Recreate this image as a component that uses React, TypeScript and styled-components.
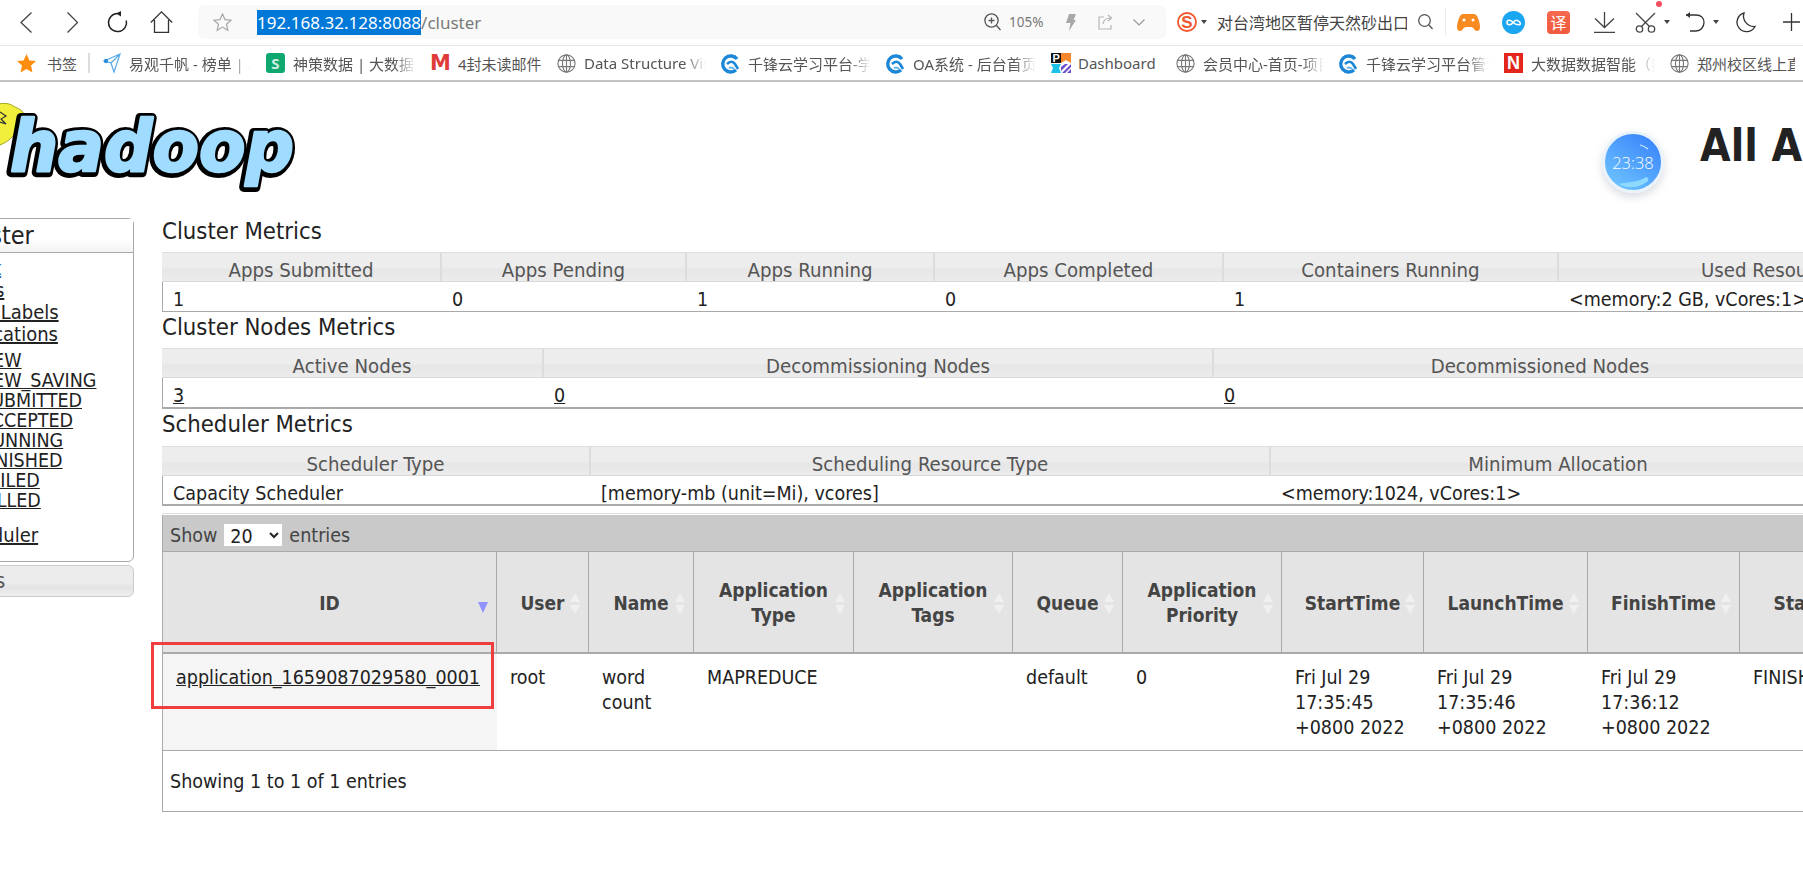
import React from 'react';
import styled, { createGlobalStyle } from 'styled-components';

const UI_FONT = `"Noto Sans", "Noto Sans CJK SC", sans-serif`;
const PAGE_FONT = `"DejaVu Sans Condensed", "DejaVu Sans", sans-serif`;

const GlobalStyle = createGlobalStyle`
  html, body {
    margin: 0;
    padding: 0;
    background: #fff;
    overflow: hidden;
  }
  * { box-sizing: border-box; }
`;

const Screen = styled.div`
  position: relative;
  width: 1803px;
  height: 890px;
  overflow: hidden;
  background: #fff;
`;

/* ---------- browser chrome ---------- */

const Toolbar = styled.div`
  display: flex;
  align-items: center;
  height: 46px;
  padding: 0 0 1px 20px;
  border-bottom: 1px solid #e6e6e6;
  font-family: ${UI_FONT};
`;

const Slot = styled.span<{ $w: number; $ml?: number }>`
  position: relative;
  display: flex;
  align-items: center;
  justify-content: center;
  flex: none;
  width: ${(p) => p.$w}px;
  margin-left: ${(p) => p.$ml ?? 0}px;
`;

const AddressBar = styled.div`
  display: flex;
  align-items: center;
  flex: none;
  width: 968px;
  height: 34px;
  margin-left: 25px;
  padding: 0 21px 0 15px;
  background: #f9f9f9;
  border-radius: 7px;
`;

const Url = styled.span`
  margin-left: 25px;
  font-size: 17px;
  line-height: 25px;
  color: #7a7a7a;
`;

const UrlSelected = styled.span`
  display: inline-block;
  background: #0078d7;
  color: #fff;
`;

const Spacer = styled.span`
  flex: 1;
`;

const ZoomLevel = styled.span`
  margin-left: 8px;
  width: 36px;
  font-size: 13.5px;
  color: #777;
`;

const SearchText = styled.span`
  flex: none;
  width: 190px;
  margin-left: 10px;
  overflow: hidden;
  white-space: nowrap;
  font-size: 16px;
  color: #444;
`;

const Divider = styled.span`
  flex: none;
  width: 1px;
  height: 28px;
  margin-left: 13px;
  background: #ececec;
`;

const TranslateBadge = styled.span`
  display: flex;
  align-items: center;
  justify-content: center;
  width: 23px;
  height: 23px;
  border-radius: 4px;
  background: linear-gradient(#f5694f, #ef5a3e);
  color: #fff;
  font-size: 16px;
`;

const RedDot = styled.span`
  position: absolute;
  top: -11px;
  right: -6px;
  width: 6px;
  height: 6px;
  border-radius: 50%;
  background: #f2505e;
`;

const BookmarkBar = styled.div`
  display: flex;
  align-items: center;
  height: 36px;
  padding: 0 0 0 17px;
  border-bottom: 2px solid #c4c4c4;
  font-family: ${UI_FONT};
  font-size: 15px;
  color: #555;
  white-space: nowrap;
  overflow: hidden;
`;

const BookmarkRoot = styled.span`
  flex: none;
  width: 30px;
  margin-left: 11px;
`;

const BookmarkSeparator = styled.span`
  flex: none;
  width: 2px;
  height: 20px;
  margin: 0 12px 0 11px;
  background: #dcdcdc;
`;

const Bookmark = styled.span<{ $w: number }>`
  display: flex;
  align-items: center;
  flex: none;
  gap: 8px;
  width: ${(p) => p.$w}px;
  padding-right: 15px;
`;

const BookmarkIcon = styled.span`
  display: flex;
  align-items: center;
  justify-content: center;
  flex: none;
  width: 19px;
  height: 20px;
`;

const BookmarkText = styled.span<{ $fade?: boolean }>`
  flex: 1;
  min-width: 0;
  overflow: hidden;
  ${(p) =>
    p.$fade
      ? `-webkit-mask-image: linear-gradient(90deg, #000 82%, transparent 100%);
         mask-image: linear-gradient(90deg, #000 82%, transparent 100%);`
      : ''}
`;

const GreenMark = styled.span`
  display: flex;
  align-items: center;
  justify-content: center;
  width: 20px;
  height: 20px;
  border-radius: 3px;
  background: #0fa871;
  color: #cdeee0;
  font-size: 15px;
  font-weight: 700;
`;

const GmailMark = styled.span`
  color: #e03b3b;
  font-family: "DejaVu Sans", sans-serif;
  font-size: 21px;
  font-weight: 700;
  line-height: 20px;
`;

const RedMark = styled.span`
  display: flex;
  align-items: center;
  justify-content: center;
  width: 20px;
  height: 20px;
  background: #e3261b;
  color: #fff;
  font-family: "Liberation Sans", sans-serif;
  font-size: 18px;
  font-weight: 700;
`;

/* ---------- the web page ---------- */

const PageHeader = styled.header`
  display: flex;
  height: 136px;
  font-family: ${PAGE_FONT};
`;

const Logo = styled.svg`
  flex: none;
  width: 304px;
  height: 136px;
`;

const Title = styled.h1`
  flex: none;
  margin: 34px 0 0 1396px;
  font-size: 44px;
  line-height: 60px;
  font-weight: 700;
  color: #222;
  white-space: nowrap;
`;

const ClockBall = styled.div`
  position: absolute;
  left: 1602px;
  top: 131px;
  display: flex;
  align-items: center;
  justify-content: center;
  width: 62px;
  height: 62px;
  border: 3px solid #eaf2fb;
  border-radius: 50%;
  background: linear-gradient(215deg, #3a85fb 10%, #6cc3ff 90%);
  box-shadow: 0 4px 8px rgba(120, 130, 150, 0.28);
  color: #fff;
  font-family: "Open Sans", ${UI_FONT};
  font-size: 16.5px;
  font-weight: 300;
`;

const ClockShine = styled.svg`
  position: absolute;
  inset: 0;
  width: 56px;
  height: 56px;
`;

const Columns = styled.div`
  display: flex;
  align-items: flex-start;
  width: 2100px;
  margin-left: -66px;
  font-family: ${PAGE_FONT};
  color: #222;
`;

const Sidebar = styled.aside`
  flex: none;
  width: 200px;
`;

const NavPanel = styled.div`
  height: 344px;
  border: 1px solid #aaa;
  border-radius: 6px;
`;

const NavHeading = styled.div`
  height: 34px;
  padding-left: 19px;
  border-bottom: 1px solid #aaa;
  background: linear-gradient(#fff 60%, #f3f3f3);
  font-size: 25px;
  line-height: 34px;
`;

const NavList = styled.ul`
  margin: 0;
  padding: 4px 0 0 13px;
  list-style: none;
`;

const NavLink = styled.a<{ $blue?: boolean }>`
  display: block;
  height: 22px;
  color: ${(p) => (p.$blue ? '#1e73d8' : '#222')};
  font-size: 20px;
  line-height: 22px;
  text-decoration: underline;
`;

const SubList = styled.ul`
  margin: 6px 0 0;
  padding: 0 0 0 32px;
  list-style: none;
`;

const SubLink = styled.a`
  display: block;
  height: 20px;
  color: #222;
  font-size: 19.5px;
  line-height: 20px;
  text-decoration: underline;
`;

const SchedulerLink = styled(NavLink)`
  margin-top: 13px;
`;

const ClosedPanel = styled.div`
  height: 32px;
  margin-top: 3px;
  padding-left: 22px;
  border: 1px solid #ccc;
  border-radius: 6px;
  background: linear-gradient(#ececec 55%, #e3e3e3 70%, #efefef);
  color: #555;
  font-size: 22px;
  line-height: 30px;
`;

const Content = styled.main`
  flex: none;
  width: 1860px;
  margin: -2px 0 0 28px;
`;

const Heading = styled.h3<{ $h?: number }>`
  height: ${(p) => p.$h ?? 36}px;
  margin: 0;
  font-size: 23.7px;
  font-weight: 400;
  line-height: 30px;
  white-space: nowrap;
`;

const MetricsTable = styled.table<{ $width: number }>`
  width: ${(p) => p.$width}px;
  table-layout: fixed;
  border-collapse: separate;
  border-spacing: 0;
`;

const Col = styled.col<{ $w: number }>`
  width: ${(p) => p.$w}px;
`;

const MetricsHead = styled.th`
  height: 30px;
  padding: 5px 0 0;
  border-top: 1px solid #ddd;
  border-right: 2px solid #dcdcdc;
  border-bottom: 1px solid #d8d8d8;
  background: linear-gradient(#ededed 50%, #e6e6e6 60%, #ececec);
  color: #555;
  font-size: 20.2px;
  font-weight: 400;
  line-height: 20px;
`;

const MetricsCell = styled.td<{ $tall?: boolean; $heavy?: boolean }>`
  height: ${(p) => (p.$tall ? 31 : 30)}px;
  padding: 7px 0 0 10px;
  border-bottom: ${(p) => (p.$heavy ? 2 : 1)}px solid #aaa;
  font-size: 19.5px;
  line-height: 20px;
  white-space: nowrap;
  overflow: hidden;

  &:first-child {
    border-left: 1px solid #aaa;
  }
`;

const CellLink = styled.a`
  color: #222;
  text-decoration: underline;
`;

const AppsWrapper = styled.div`
  position: relative;
  width: 1697px;
  margin-top: 7px;
  border-top: 1px solid #ddd;
`;

const AppsToolbar = styled.div`
  display: flex;
  align-items: center;
  height: 36px;
  margin-top: 1px;
  padding: 4px 0 0 7px;
  border-left: 1px solid #aaa;
  background: #c9c9c9;
  color: #444;
  font-size: 19.5px;
`;

const PageSize = styled.select`
  width: 58px;
  height: 22px;
  margin: 0 7px 0 7px;
  padding: 0 0 0 2px;
  border: none;
  outline: none;
  background: #fff;
  color: #222;
  font-family: ${PAGE_FONT};
  font-size: 19.5px;
`;

const AppsTable = styled(MetricsTable)`
  border-left: 1px solid #aaa;
`;

const AppsHead = styled.th`
  position: relative;
  height: 103px;
  padding: 2px 0 0;
  border-top: 1px solid #aaa;
  border-right: 1px solid #aaa;
  border-bottom: 2px solid #aaa;
  background: #e4e4e4;
  color: #444;
  font-size: 19px;
  font-weight: 700;
  line-height: 25px;
  text-align: center;
`;

const SortMark = styled.svg`
  position: absolute;
  right: 7px;
  top: 40px;
  width: 12px;
  height: 23px;
`;

const AppsCell = styled.td<{ $sorted?: boolean }>`
  height: 97px;
  padding: 11px 10px 0 13px;
  border-bottom: 1px solid #aaa;
  background: ${(p) => (p.$sorted ? '#f5f5f5' : '#fff')};
  font-size: 19.5px;
  line-height: 25px;
  vertical-align: top;
  overflow: hidden;
`;

const AppsFooter = styled.div`
  height: 61px;
  padding-left: 7px;
  border-left: 1px solid #aaa;
  border-bottom: 1px solid #aaa;
  font-size: 19.5px;
  line-height: 62px;
`;

const Highlight = styled.div`
  position: absolute;
  left: -11px;
  top: 128px;
  width: 343px;
  height: 67px;
  border: 3px solid #f13d3d;
`;

/* ---------- drawings ---------- */

const Line = styled.svg`
  display: block;
  overflow: visible;
`;

const Caret = () => (
  <Line width="6" height="4" viewBox="0 0 6 4">
    <path d="M0 0h6L3 4z" fill="#444" />
  </Line>
);

const QianfengIcon = () => (
  <Line width="19" height="20" viewBox="0 0 19 20">
    <path d="M15 17A8 8 0 1 1 16 6" fill="none" stroke="#1b87d6" strokeWidth="3.4" />
    <path d="M6 11c3-3 6-3 8 0l3 5" fill="none" stroke="#1b87d6" strokeWidth="2.6" />
    <path d="M8 15c2-1 3-1 5 1" fill="none" stroke="#63b6ea" strokeWidth="2" />
  </Line>
);

const GlobeIcon = () => (
  <Line width="19" height="19" viewBox="0 0 19 19" fill="none" stroke="#777" strokeWidth="1.1">
    <circle cx="9.5" cy="9.5" r="8.6" />
    <ellipse cx="9.5" cy="9.5" rx="4" ry="8.6" />
    <path d="M9.5 1v17M1.6 6.4h15.8M1.6 12.6h15.8" />
  </Line>
);

const YiguanIcon = () => (
  <Line width="18" height="20" viewBox="0 0 18 20" fill="none" stroke="#56a9e6" strokeWidth="1.2">
    <path d="M1 8 17 1 11 19 8 10ZM8 10 17 1M1 8l7 2" />
    <circle cx="3" cy="8" r="2.2" fill="#2c8fdc" stroke="none" />
  </Line>
);

const PmIcon = () => (
  <Line width="20" height="20" viewBox="0 0 20 20">
    <rect x="0" y="0" width="10" height="10" fill="#111" />
    <text x="1.6" y="9" fontSize="11" fontWeight="700" fill="#fff" fontFamily="Liberation Sans">P</text>
    <path d="M10 0h10v10l-5-3-5 3z" fill="#f6882b" />
    <path d="M0 11h10L8 15l2 5H0l2-5z" fill="#1cc3e6" />
    <path d="M11 20 20 11v3l-6 6zM16 20l4-4v4z" fill="#6b4fc8" />
    <path d="M10 14l4-3h3l-7 7z" fill="#6b4fc8" />
  </Line>
);

const SORT_CHEVRON = '#f0f0f0';

const SortArrows = () => (
  <SortMark viewBox="0 0 12 23">
    <path d="M6 1 11 10H1z" fill={SORT_CHEVRON} />
    <path d="M6 22 11 13H1z" fill={SORT_CHEVRON} />
  </SortMark>
);

const SortedDown = () => (
  <SortMark viewBox="0 0 12 23">
    <path d="M1 10h10l-5 11z" fill="#8f92ff" />
  </SortMark>
);

const StarFilled = () => (
  <Line width="19" height="19" viewBox="0 0 19 19">
    <path d="M9.5 0l2.9 6.4 6.6.7-5 4.5 1.5 6.9-6-3.5-6 3.5 1.5-6.9-5-4.5 6.6-.7z" fill="#ff8c0a" />
  </Line>
);

type Mark = 'yiguan' | 'green' | 'gmail' | 'globe' | 'qf' | 'pm' | 'red';

const markFor = (mark: Mark) => {
  switch (mark) {
    case 'yiguan':
      return <YiguanIcon />;
    case 'green':
      return <GreenMark>S</GreenMark>;
    case 'gmail':
      return <GmailMark>M</GmailMark>;
    case 'globe':
      return <GlobeIcon />;
    case 'qf':
      return <QianfengIcon />;
    case 'pm':
      return <PmIcon />;
    default:
      return <RedMark>N</RedMark>;
  }
};

const bookmarks: { mark: Mark; text: string; w: number; fade?: boolean }[] = [
  { mark: 'yiguan', text: '易观千帆 - 榜单 | 易观方舟', w: 164, fade: true },
  { mark: 'green', text: '神策数据 | 大数据分析平台', w: 165, fade: true },
  { mark: 'gmail', text: '4封未读邮件', w: 126 },
  { mark: 'globe', text: 'Data Structure Visualization', w: 164, fade: true },
  { mark: 'qf', text: '千锋云学习平台-学员中心', w: 165, fade: true },
  { mark: 'qf', text: 'OA系统 - 后台首页面', w: 165, fade: true },
  { mark: 'pm', text: 'Dashboard', w: 125 },
  { mark: 'globe', text: '会员中心-首页-项目管理', w: 163, fade: true },
  { mark: 'qf', text: '千锋云学习平台管理后台', w: 165, fade: true },
  { mark: 'red', text: '大数据数据智能（数据', w: 166, fade: true },
  { mark: 'globe', text: '郑州校区线上直播', w: 140 },
];

const clusterHeads = ['Apps Submitted', 'Apps Pending', 'Apps Running', 'Apps Completed', 'Containers Running', 'Used Resources'];
const clusterCells = ['1', '0', '1', '0', '1', '<memory:2 GB, vCores:1>'];
const clusterCols = [280, 245, 248, 289, 335, 430];

const nodeHeads = ['Active Nodes', 'Decommissioning Nodes', 'Decommissioned Nodes'];
const nodeCols = [382, 670, 654];

const schedulerHeads = ['Scheduler Type', 'Scheduling Resource Type', 'Minimum Allocation'];
const schedulerCells = ['Capacity Scheduler', '[memory-mb (unit=Mi), vcores]', '<memory:1024, vCores:1>'];
const schedulerCols = [429, 680, 576];

const appCols = [334, 92, 105, 160, 159, 110, 159, 142, 164, 152, 120];
const appHeads: React.ReactNode[] = [
  'ID',
  'User',
  'Name',
  <>Application<br />Type</>,
  <>Application<br />Tags</>,
  'Queue',
  <>Application<br />Priority</>,
  'StartTime',
  'LaunchTime',
  'FinishTime',
  'State',
];
const appCells: React.ReactNode[] = [
  'root',
  'word count',
  'MAPREDUCE',
  '',
  'default',
  '0',
  <>Fri Jul 29 17:35:45 +0800 2022</>,
  <>Fri Jul 29 17:35:46 +0800 2022</>,
  <>Fri Jul 29 17:36:12 +0800 2022</>,
  'FINISHED',
];

const App: React.FC = () => {
  return (
    <Screen>
      <GlobalStyle />

      <Toolbar>
        <Slot $w={12}>
          <Line width="12" height="21" viewBox="0 0 12 21" fill="none" stroke="#444" strokeWidth="1.3">
            <path d="M11.5 .5 1 10.5l10.5 10" />
          </Line>
        </Slot>
        <Slot $w={11} $ml={35}>
          <Line width="11" height="21" viewBox="0 0 11 21" fill="none" stroke="#444" strokeWidth="1.3">
            <path d="M.5 .5 10.5 10.5.5 20.5" />
          </Line>
        </Slot>
        <Slot $w={20} $ml={29}>
          <Line width="20" height="22" viewBox="0 0 20 22" fill="none" stroke="#222" strokeWidth="1.5">
            <path d="M10.5 2.6A9 9 0 1 0 19.300 9.500" />
            <path d="M9 2.600 14 0v5.400z" fill="#222" stroke="none" />
          </Line>
        </Slot>
        <Slot $w={23} $ml={23}>
          <Line width="23" height="22" viewBox="0 0 23 22" fill="none" stroke="#333" strokeWidth="1.3">
            <path d="M.8 11.5 11.5.8l10.7 10.7M4.5 9v12.3h14V9" />
          </Line>
        </Slot>

        <AddressBar>
          <Slot $w={19}>
            <Line width="19" height="18" viewBox="0 0 19 18" fill="none" stroke="#a5a5a5" strokeWidth="1.2">
              <path d="M9.5 1l2.5 5.6 6 .6-4.5 4 1.3 6-5.3-3.1-5.3 3.1 1.3-6-4.5-4 6-.6z" />
            </Line>
          </Slot>
          <Url>
            <UrlSelected>192.168.32.128:8088</UrlSelected>/cluster
          </Url>
          <Spacer />
          <Slot $w={17}>
            <Line width="17" height="18" viewBox="0 0 17 18" fill="none" stroke="#555" strokeWidth="1.3">
              <circle cx="7.5" cy="7.5" r="6.6" />
              <path d="M12.3 12.3 16.5 17M7.5 4.5v6M4.5 7.5h6" />
            </Line>
          </Slot>
          <ZoomLevel>105%</ZoomLevel>
          <Slot $w={10} $ml={21}>
            <Line width="10" height="17" viewBox="0 0 10 17">
              <path d="M3 0h7L7.5 6H10L3 17l1.5-8H0z" fill="#a8a8a8" />
            </Line>
          </Slot>
          <Slot $w={15} $ml={22}>
            <Line width="15" height="16" viewBox="0 0 15 16" fill="none" stroke="#b5b5b5" strokeWidth="1.2">
              <path d="M6 3H1v12h12v-4M5 10c.5-4 3-6 8-6M10 1l3.5 3L10 7" />
            </Line>
          </Slot>
          <Slot $w={12} $ml={20}>
            <Line width="12" height="7" viewBox="0 0 12 7" fill="none" stroke="#999" strokeWidth="1.2">
              <path d="M.5 .5 6 6l5.5-5.5" />
            </Line>
          </Slot>
        </AddressBar>

        <Slot $w={20} $ml={11}>
          <Line width="20" height="21" viewBox="0 0 20 21">
            <circle cx="10" cy="10" r="9" fill="none" stroke="#f0552b" strokeWidth="1.8" />
            <text x="10" y="16" textAnchor="middle" fontSize="17" fontWeight="700" fill="#f0552b" fontFamily="Liberation Sans">S</text>
          </Line>
        </Slot>
        <Slot $w={6} $ml={4}>
          <Caret />
        </Slot>
        <SearchText>对台湾地区暂停天然砂出口</SearchText>
        <Slot $w={14} $ml={11}>
          <Line width="15" height="16" viewBox="0 0 15 16" fill="none" stroke="#555" strokeWidth="1.3">
            <circle cx="6.5" cy="6.5" r="5.8" />
            <path d="M10.8 10.8 14.5 15" />
          </Line>
        </Slot>
        <Divider />
        <Slot $w={23} $ml={11}>
          <Line width="23" height="19" viewBox="0 0 23 19">
            <path d="M6 1h11c3 0 5 5 6 12 .3 3-1 5-3 5-3 0-3-4-6-4H9c-3 0-3 4-6 4-2 0-3.300-2-3-5C1 6 3 1 6 1z" fill="#f88a22" />
            <circle cx="7" cy="7" r="1.500" fill="#fff" />
            <circle cx="16" cy="7" r="1.500" fill="#fff" />
          </Line>
        </Slot>
        <Slot $w={23} $ml={22}>
          <Line width="23" height="23" viewBox="0 0 23 23">
            <circle cx="11.500" cy="11.500" r="11.500" fill="#1ba6f2" />
            <path d="M11 11.500c-2-3-6-3-6 0s4 3 6 0 5-3 7 0-4 3-7 0z" fill="none" stroke="#fff" strokeWidth="1.600" />
          </Line>
        </Slot>
        <Slot $w={23} $ml={22}>
          <TranslateBadge>译</TranslateBadge>
        </Slot>
        <Slot $w={21} $ml={24}>
          <Line width="21" height="21" viewBox="0 0 21 21" fill="none" stroke="#444" strokeWidth="1.300">
            <path d="M10.500 0v15M1 6.500l9.500 9 9.500-9M0 20.300h21" />
          </Line>
        </Slot>
        <Slot $w={21} $ml={20}>
          <Line width="21" height="21" viewBox="0 0 21 21" fill="none" stroke="#444" strokeWidth="1.300">
            <circle cx="4.500" cy="17" r="3.200" />
            <circle cx="16.500" cy="17" r="3.200" />
            <path d="M6.500 14.500 20 1M14.500 14.500 1 1" />
          </Line>
          <RedDot />
        </Slot>
        <Slot $w={6} $ml={8}>
          <Caret />
        </Slot>
        <Slot $w={19} $ml={15}>
          <Line width="20" height="20" viewBox="0 0 20 20" fill="none" stroke="#333" strokeWidth="1.300">
            <path d="M1 3h10c5 0 8 3 8 7.500S15.500 19 11 19H5" />
            <path d="M5 0 1 3l4 3z" fill="#333" stroke="none" />
          </Line>
        </Slot>
        <Slot $w={6} $ml={9}>
          <Caret />
        </Slot>
        <Slot $w={19} $ml={18}>
          <Line width="19" height="20" viewBox="0 0 19 20" fill="none" stroke="#333" strokeWidth="1.300">
            <path d="M7 1a9.500 9.500 0 1 0 11 13.500A10.500 10.500 0 0 1 7 1z" />
          </Line>
        </Slot>
        <Slot $w={17} $ml={27}>
          <Line width="17" height="18" viewBox="0 0 17 18" fill="none" stroke="#333" strokeWidth="1.300">
            <path d="M8.500 0v18M0 9h17" />
          </Line>
        </Slot>
      </Toolbar>

      <BookmarkBar>
        <StarFilled />
        <BookmarkRoot>书签</BookmarkRoot>
        <BookmarkSeparator />
        {bookmarks.map((b) => (
          <Bookmark key={b.text} $w={b.w}>
            <BookmarkIcon>{markFor(b.mark)}</BookmarkIcon>
            <BookmarkText $fade={b.fade}>{b.text}</BookmarkText>
          </Bookmark>
        ))}
      </BookmarkBar>

      <PageHeader>
        <Logo viewBox="0 0 304 136">
          <path d="M-6 24c6-4 16-3 19 0 6 3 10 4 11 9 0 7-5 14-9 19-6 7-14 12-21 12z" fill="#f2ee3c" stroke="#a5a522" strokeWidth="1" />
          <path d="M0 30l6 4-5 3 5 5-6-2" fill="none" stroke="#333" strokeWidth="1.200" />
          <text
            x="9"
            y="90"
            fontFamily="'DejaVu Sans', sans-serif"
            fontStyle="italic"
            fontWeight="700"
            fontSize="72"
            textLength="284"
            lengthAdjust="spacingAndGlyphs"
            fill="#000"
            stroke="#000"
            strokeWidth="10"
            strokeLinejoin="round"
          >
            hadoop
          </text>
          <text
            x="10"
            y="89"
            fontFamily="'DejaVu Sans', sans-serif"
            fontStyle="italic"
            fontWeight="700"
            fontSize="72"
            textLength="284"
            lengthAdjust="spacingAndGlyphs"
            fill="#9fdcff"
            stroke="#9fdcff"
            strokeWidth="2.500"
            strokeLinejoin="round"
          >
            hadoop
          </text>
        </Logo>
        <Title>All Applications</Title>
      </PageHeader>

      <ClockBall>
        <ClockShine viewBox="0 0 56 56">
          <path d="M35 11c3 .5 5 1.500 8 4" fill="none" stroke="#dcecff" strokeWidth="1.200" />
          <path d="M14 50c9-2 20-2 27-7 3 1 3 3 1 5-9 6-19 7-28 2z" fill="#8fd9ff" />
        </ClockShine>
        23:38
      </ClockBall>

      <Columns>
        <Sidebar>
          <NavPanel>
            <NavHeading>Cluster</NavHeading>
            <NavList>
              <li><NavLink $blue>About</NavLink></li>
              <li><NavLink>Nodes</NavLink></li>
              <li><NavLink>Node Labels</NavLink></li>
              <li>
                <NavLink>Applications</NavLink>
                <SubList>
                  {['NEW', 'NEW_SAVING', 'SUBMITTED', 'ACCEPTED', 'RUNNING', 'FINISHED', 'FAILED', 'KILLED'].map((s) => (
                    <li key={s}><SubLink>{s}</SubLink></li>
                  ))}
                </SubList>
              </li>
              <li><SchedulerLink>Scheduler</SchedulerLink></li>
            </NavList>
          </NavPanel>
          <ClosedPanel>Tools</ClosedPanel>
        </Sidebar>

        <Content>
          <Heading>Cluster Metrics</Heading>
          <MetricsTable $width={1826}>
            <colgroup>
              {clusterCols.map((w, i) => <Col key={i} $w={w} />)}
            </colgroup>
            <thead>
              <tr>{clusterHeads.map((h) => <MetricsHead key={h}>{h}</MetricsHead>)}</tr>
            </thead>
            <tbody>
              <tr>{clusterCells.map((c, i) => <MetricsCell key={i}>{c}</MetricsCell>)}</tr>
            </tbody>
          </MetricsTable>

          <Heading>Cluster Nodes Metrics</Heading>
          <MetricsTable $width={1706}>
            <colgroup>
              {nodeCols.map((w, i) => <Col key={i} $w={w} />)}
            </colgroup>
            <thead>
              <tr>{nodeHeads.map((h) => <MetricsHead key={h}>{h}</MetricsHead>)}</tr>
            </thead>
            <tbody>
              <tr>
                {['3', '0', '0'].map((c, i) => (
                  <MetricsCell key={i} $tall $heavy><CellLink>{c}</CellLink></MetricsCell>
                ))}
              </tr>
            </tbody>
          </MetricsTable>

          <Heading $h={37}>Scheduler Metrics</Heading>
          <MetricsTable $width={1685}>
            <colgroup>
              {schedulerCols.map((w, i) => <Col key={i} $w={w} />)}
            </colgroup>
            <thead>
              <tr>{schedulerHeads.map((h) => <MetricsHead key={h}>{h}</MetricsHead>)}</tr>
            </thead>
            <tbody>
              <tr>{schedulerCells.map((c, i) => <MetricsCell key={i} $heavy>{c}</MetricsCell>)}</tr>
            </tbody>
          </MetricsTable>

          <AppsWrapper>
            <AppsToolbar>
              Show
              <PageSize defaultValue="20">
                <option value="20">20</option>
              </PageSize>
              entries
            </AppsToolbar>
            <AppsTable $width={1697}>
              <colgroup>
                {appCols.map((w, i) => <Col key={i} $w={w} />)}
              </colgroup>
              <thead>
                <tr>
                  {appHeads.map((h, i) => (
                    <AppsHead key={i}>
                      {h}
                      {i === 0 ? <SortedDown /> : <SortArrows />}
                    </AppsHead>
                  ))}
                </tr>
              </thead>
              <tbody>
                <tr>
                  <AppsCell $sorted><CellLink>application_1659087029580_0001</CellLink></AppsCell>
                  {appCells.map((c, i) => <AppsCell key={i}>{c}</AppsCell>)}
                </tr>
              </tbody>
            </AppsTable>
            <AppsFooter>Showing 1 to 1 of 1 entries</AppsFooter>
            <Highlight />
          </AppsWrapper>
        </Content>
      </Columns>
    </Screen>
  );
};

export default App;
